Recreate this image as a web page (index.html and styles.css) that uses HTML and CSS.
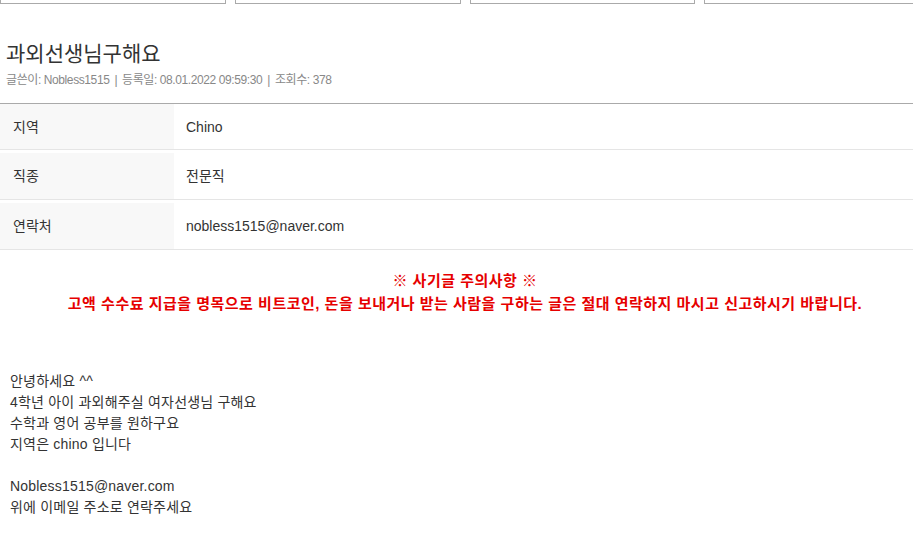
FILE: index.html
```html
<!DOCTYPE html>
<html lang="ko">
<head>
    <meta charset="UTF-8">
    <meta name="viewport" content="width=device-width, initial-scale=1.0">
    <title>과외선생님구해요</title>
    <link rel="stylesheet" href="styles.css">
</head>
<body>

    <div class="tabs">
        <div class="tab"></div>
        <div class="tab"></div>
        <div class="tab"></div>
        <div class="tab"></div>
    </div>

    <div class="post-head">
        <h1 class="post-title">과외선생님구해요</h1>
        <p class="post-meta">글쓴이: Nobless1515 <span class="sep">|</span> 등록일: 08.01.2022 09:59:30 <span class="sep">|</span> 조회수: 378</p>
    </div>

    <div class="info">
        <div class="info-row">
            <div class="info-label">지역</div>
            <div class="info-value">Chino</div>
        </div>
        <div class="info-row">
            <div class="info-label">직종</div>
            <div class="info-value">전문직</div>
        </div>
        <div class="info-row">
            <div class="info-label">연락처</div>
            <div class="info-value">nobless1515@naver.com</div>
        </div>
    </div>

    <div class="warning">
        <p>※ 사기글 주의사항 ※</p>
        <p>고액 수수료 지급을 명목으로 비트코인, 돈을 보내거나 받는 사람을 구하는 글은 절대 연락하지 마시고 신고하시기 바랍니다.</p>
    </div>

    <div class="post-body">
        안녕하세요 ^^<br>
        4학년 아이 과외해주실 여자선생님 구해요<br>
        수학과 영어 공부를 원하구요<br>
        지역은 chino 입니다<br>
        <br>
        Nobless1515@naver.com<br>
        위에 이메일 주소로 연락주세요
    </div>

</body>
</html>
```

FILE: styles.css
```css
body {
    font-family: "Liberation Sans", "Noto Sans CJK KR", sans-serif;
    margin: 0;
    color: #333;
    background: #fff;
    width: 930px;
}

/* Top tab boxes */
.tabs {
    display: flex;
    gap: 9px;
}

.tab {
    width: 224px;
    height: 3px;
    border: 1px solid #aaa;
    border-top: none;
}

/* Post header */
.post-head {
    padding: 34px 6px 0;
}

.post-title {
    margin: 0;
    font-family: "Noto Sans CJK KR", sans-serif;
    font-size: 21px;
    font-weight: 400;
    line-height: 28px;
    color: #333;
}

.post-meta {
    margin: 6px 0 0;
    font-size: 12px;
    line-height: 16px;
    color: #888;
    letter-spacing: -0.4px;
}

.sep {
    padding: 0 2px;
}

/* Info table */
.info {
    margin-top: 15px;
    border-top: 1px solid #aaa;
    width: 913px;
}

.info-row {
    display: flex;
    border-bottom: 1px solid #e5e5e5;
    font-size: 14px;
}

.info-row + .info-row {
    padding-top: 3px;
}

.info-label {
    width: 161px;
    padding-left: 13px;
    background: #f8f8f8;
    height: 45px;
    line-height: 47px;
}

.info-row + .info-row .info-label {
    height: 46px;
    line-height: 46px;
}

.info-value {
    padding-left: 12px;
    line-height: 47px;
    height: 45px;
}

/* Scam warning */
.warning {
    margin-top: 19px;
    text-align: center;
    color: #e60000;
    font-weight: bold;
    font-size: 15px;
    letter-spacing: 0.5px;
    line-height: 23px;
}

.warning p {
    margin: 0;
}

/* Post body */
.post-body {
    padding: 56px 10px 0;
    font-size: 14px;
    line-height: 21px;
    letter-spacing: 0.2px;
}
```
